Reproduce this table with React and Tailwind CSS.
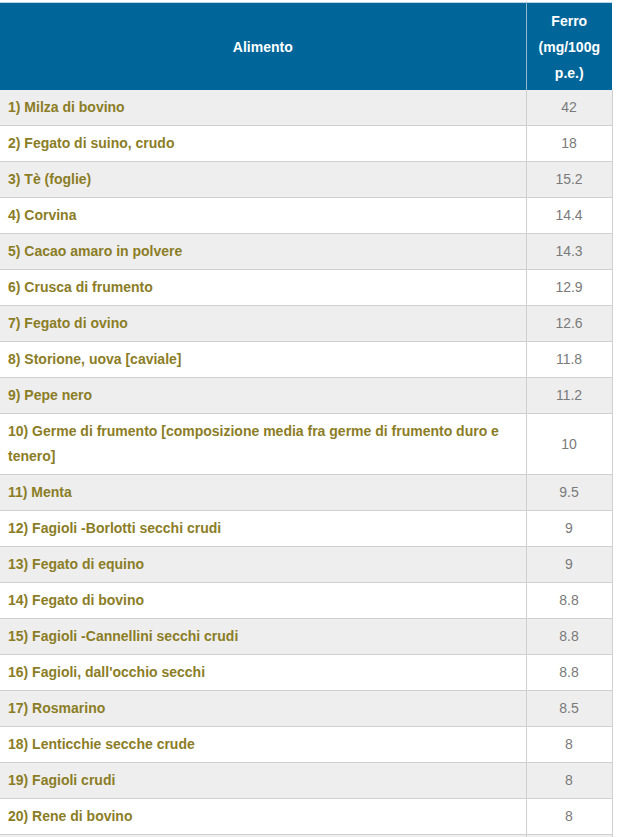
import React from "react";

const rows = [
  ["1) Milza di bovino", "42"],
  ["2) Fegato di suino, crudo", "18"],
  ["3) Tè (foglie)", "15.2"],
  ["4) Corvina", "14.4"],
  ["5) Cacao amaro in polvere", "14.3"],
  ["6) Crusca di frumento", "12.9"],
  ["7) Fegato di ovino", "12.6"],
  ["8) Storione, uova [caviale]", "11.8"],
  ["9) Pepe nero", "11.2"],
  ["10) Germe di frumento [composizione media fra germe di frumento duro e tenero]", "10"],
  ["11) Menta", "9.5"],
  ["12) Fagioli -Borlotti secchi crudi", "9"],
  ["13) Fegato di equino", "9"],
  ["14) Fegato di bovino", "8.8"],
  ["15) Fagioli -Cannellini secchi crudi", "8.8"],
  ["16) Fagioli, dall'occhio secchi", "8.8"],
  ["17) Rosmarino", "8.5"],
  ["18) Lenticchie secche crude", "8"],
  ["19) Fagioli crudi", "8"],
  ["20) Rene di bovino", "8"],
];

export default function App() {
  return (
    <div className="bg-white pt-[2px] w-[617px] h-[837px] overflow-hidden" style={{ fontFamily: '"Liberation Sans", Arial, sans-serif' }}>
      <table className="w-[612px] table-fixed border-collapse text-[14px]">
        <colgroup>
          <col className="w-[526px]" />
          <col className="w-[86px]" />
        </colgroup>
        <thead>
          <tr className="bg-[#006699] text-white border-t border-t-[#b7d4e4]">
            <th className="h-[87px] pt-[5px] pb-[4px] px-[8px] font-bold leading-[26px] text-center border-r border-r-[#8fb6cf]">Alimento</th>
            <th className="h-[87px] pt-[5px] pb-[4px] px-[8px] font-bold leading-[26px] text-center">Ferro (mg/100g p.e.)</th>
          </tr>
        </thead>
        <tbody>
          {rows.map(([name, val], i) => (
            <tr key={i} className={i % 2 === 0 ? "bg-[#eeeeee]" : "bg-white"}>
              <td className="border-b border-b-[#d0d0d0] border-r border-r-[#d0d0d0] py-[5px] pl-[8px] pr-[8px] leading-[25px] font-bold text-[#8b7d26]">{name}</td>
              <td className="border-b border-b-[#d0d0d0] border-r border-r-[#d0d0d0] py-[5px] px-[8px] leading-[25px] text-center text-[#7a7a7a]">{val}</td>
            </tr>
          ))}
          <tr className="bg-[#eeeeee]">
            <td className="h-[36px] border-r border-r-[#d0d0d0]"></td>
            <td className="h-[36px] border-r border-r-[#d0d0d0]"></td>
          </tr>
        </tbody>
      </table>
    </div>
  );
}
